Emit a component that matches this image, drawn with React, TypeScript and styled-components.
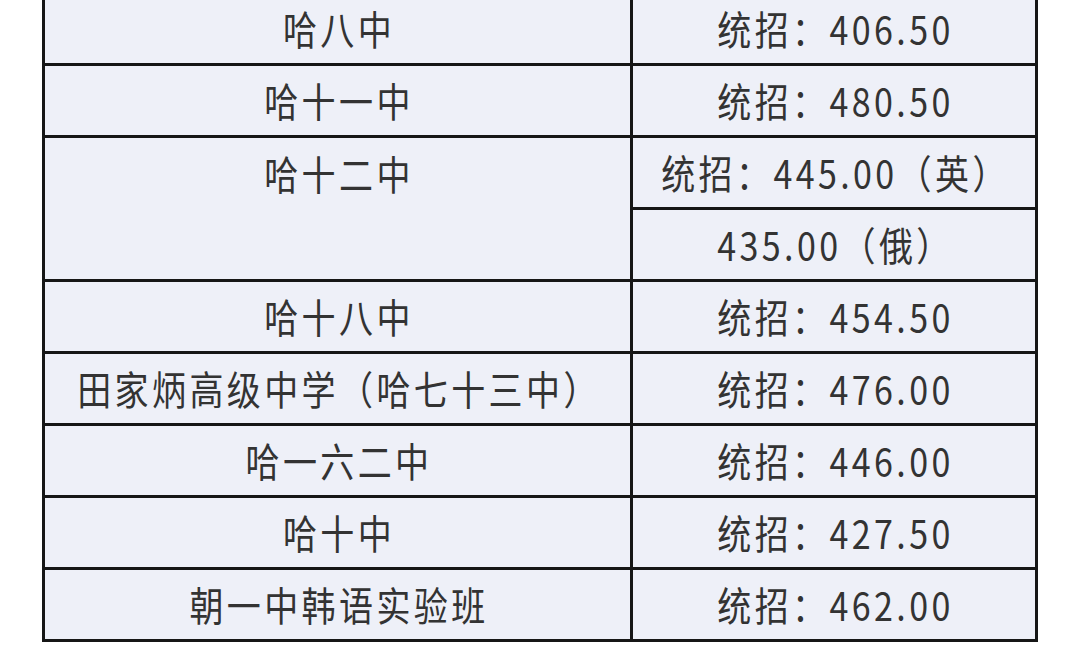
import React from "react";
import styled, { createGlobalStyle } from "styled-components";

const Global = createGlobalStyle`
  html, body { margin: 0; padding: 0; background: #ffffff; }
  body { font-family: "Noto Sans CJK SC", "Noto Sans", sans-serif; overflow: hidden; }
`;

const Page = styled.div`
  width: 1080px;
  height: 669px;
  padding-left: 42px;
  box-sizing: border-box;
  overflow: hidden;
`;

const Table = styled.table`
  margin-top: -9px;
  width: 996px;
  border-collapse: collapse;
  table-layout: fixed;
  border: 3px solid #161616;
  background: #eef0f8;
`;

const Cell = styled.td<{ $top?: boolean }>`
  border: 3px solid #161616;
  height: 69px;
  padding: 0;
  text-align: center;
  vertical-align: ${(p) => (p.$top ? "top" : "middle")};
  color: #333333;
  font-size: 34px;
  letter-spacing: 3.4px;
  white-space: nowrap;
`;

const Label = styled.span<{ $top?: boolean }>`
  display: inline-block;
  line-height: ${(p) => (p.$top ? "72px" : "40px")};
  transform: scaleY(1.16);
  margin-right: -3px;
`;

type Row = { name: string; scores: string[] };

const rows: Row[] = [
  { name: "哈八中", scores: ["统招：406.50"] },
  { name: "哈十一中", scores: ["统招：480.50"] },
  { name: "哈十二中", scores: ["统招：445.00（英）", "435.00（俄）"] },
  { name: "哈十八中", scores: ["统招：454.50"] },
  { name: "田家炳高级中学（哈七十三中）", scores: ["统招：476.00"] },
  { name: "哈一六二中", scores: ["统招：446.00"] },
  { name: "哈十中", scores: ["统招：427.50"] },
  { name: "朝一中韩语实验班", scores: ["统招：462.00"] },
];

export default function App() {
  return (
    <Page>
      <Global />
      <Table>
        <colgroup>
          <col style={{ width: "588px" }} />
          <col />
        </colgroup>
        <tbody>
          {rows.flatMap((r) =>
            r.scores.map((s, i) => (
              <tr key={r.name + i}>
                {i === 0 && (
                  <Cell rowSpan={r.scores.length} $top={r.scores.length > 1}>
                    <Label $top={r.scores.length > 1}>{r.name}</Label>
                  </Cell>
                )}
                <Cell>
                  <Label>{s}</Label>
                </Cell>
              </tr>
            ))
          )}
        </tbody>
      </Table>
    </Page>
  );
}
